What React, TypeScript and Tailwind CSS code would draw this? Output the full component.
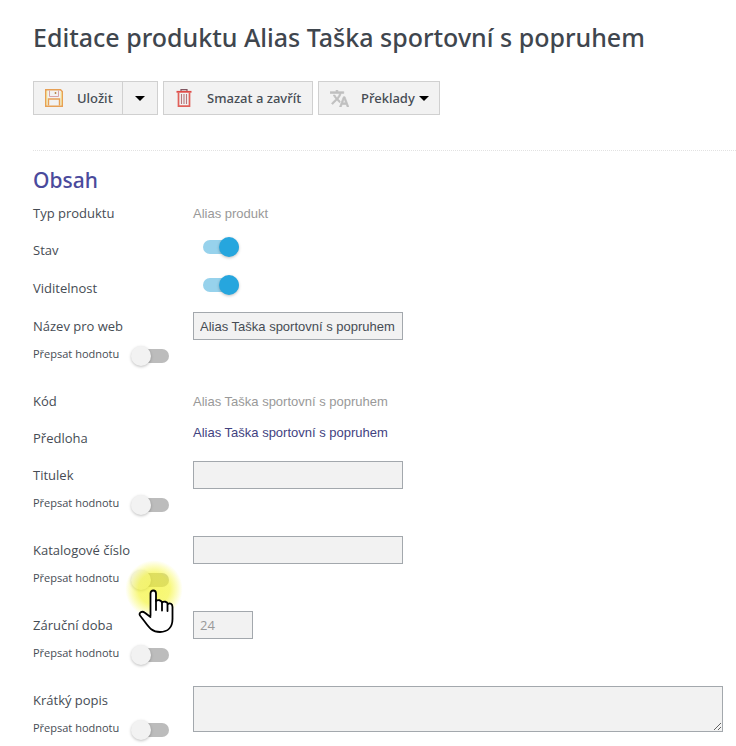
import React, { useState } from 'react';

interface ToggleProps {
  id: string;
  defaultChecked?: boolean;
  className?: string;
}

const Toggle: React.FC<ToggleProps> = ({ id, defaultChecked = false, className = '' }) => {
  const [checked, setChecked] = useState(defaultChecked);

  return (
    <input
      id={id}
      type="checkbox"
      role="switch"
      checked={checked}
      onChange={e => setChecked(e.target.checked)}
      className={`relative block h-3.5 w-9 shrink-0 cursor-pointer appearance-none rounded-full bg-[#bcbcbc] before:absolute before:-left-0.5 before:-top-[3px] before:size-5 before:rounded-full before:bg-[#f2f2f2] before:shadow-[0_1px_3px_rgba(0,0,0,0.25)] checked:bg-[#97d2ec] checked:before:left-4 checked:before:bg-[#26a6de] ${className}`}
    />
  );
};

interface FieldRowProps {
  id: string;
  label: string;
  plain?: boolean;
  override?: boolean;
  className?: string;
  pointer?: boolean;
  children: React.ReactNode;
}

const FieldRow: React.FC<FieldRowProps> = ({ id, label, plain, override, className = '', pointer, children }) => (
  <div className={`flex ${className}`}>
    <div className="w-40 shrink-0 pt-[9px]">
      {plain ? (
        <span className="block leading-5">{label}</span>
      ) : (
        <label htmlFor={id} className="block leading-5">{label}</label>
      )}
      {override && (
        <div className="relative mt-2 flex h-5">
          <label htmlFor={`${id}-override`} className="w-[100px] text-[11px] leading-5">
            Přepsat hodnotu
          </label>
          <Toggle id={`${id}-override`} className="mt-[5px]" />
          {pointer && <Pointer />}
        </div>
      )}
    </div>
    <div className="min-w-0 grow pr-[13px] font-['Liberation_Sans',Arial,sans-serif]">{children}</div>
  </div>
);

// Hand cursor with its click highlight
const Pointer: React.FC = () => (
  <div className="pointer-events-none absolute left-[92px] top-[-8px]">
    <div className="size-[58px] rounded-full bg-[radial-gradient(circle,rgba(243,243,40,0.68)_0%,rgba(243,243,40,0.62)_38%,rgba(248,248,80,0.35)_56%,rgba(255,255,200,0)_70%)]" />
    <svg viewBox="0 0 36 46" className="absolute left-[13px] top-[29px] h-[46px] w-9" fill="#fff" stroke="#000" strokeWidth="1.800" strokeLinejoin="round" strokeLinecap="round">
      <path d="M12.500 26.500V4.500C12.500 0.500 18 0.500 18 4.500V12C20 10.500 23 11 24 13.500C26 12 29 12.500 30 15C32 13.500 34.500 15 34.500 18V30C34.500 38 30 43 22 43C14 43 11 38.500 7 33L2 26.500C0.500 24 4 21.500 6.500 23.500L12.500 28" />
      <path d="M18 11V21M24 13V21.500M29.500 15V22" fill="none" />
    </svg>
  </div>
);

const Caret: React.FC = () => (
  <svg viewBox="0 0 10 5" className="h-[5px] w-2.5" fill="#000">
    <path d="M0 0H10L5 5Z" />
  </svg>
);

const SaveIcon: React.FC = () => (
  <svg viewBox="0 0 18 18" className="size-[18px]" fill="none">
    <path d="M0.800 0.800H15.500L17.200 2.500V17.200H0.800Z" stroke="#e7a055" strokeWidth="1.600" />
    <path d="M1.800 2V16.200M16.200 3V16.200" stroke="#f3df8c" />
    <path d="M4.500 1.500V7.500H13.500V1.500" stroke="#d6a3a8" />
    <path d="M10.500 3V5" stroke="#b98a50" strokeWidth="1.500" />
    <path d="M3.500 16.500V10H14.500V16.500" stroke="#e7a055" strokeWidth="1.400" />
  </svg>
);

const TrashIcon: React.FC = () => (
  <svg viewBox="0 0 16 18" className="h-[18px] w-4" fill="none">
    <path d="M5 2V0.600H11V2" stroke="#80545f" strokeWidth="1.200" />
    <path d="M0.500 2.800H15.500" stroke="#e04b47" strokeWidth="1.800" />
    <path d="M2.500 3.500V17.200H13.500V3.500" stroke="#e0605a" strokeWidth="1.700" />
    <path d="M5.500 5V15M8 5V15M10.500 5V15" stroke="#b8787c" strokeWidth="1.100" />
  </svg>
);

const TranslateIcon: React.FC = () => (
  <svg viewBox="1 2 22 20" className="h-[17px] w-[19px]" fill="#c0c0c0" stroke="#c0c0c0" strokeWidth="0.800">
    <path d="M12.870 15.070l-2.540-2.510.030-.030c1.740-1.940 2.980-4.170 3.710-6.530H17V4h-7V2H8v2H1v1.990h11.170C11.500 7.920 10.440 9.750 9 11.350 8.070 10.320 7.300 9.190 6.690 8h-2c.730 1.630 1.730 3.170 2.980 4.560l-5.090 5.020L4 19l5-5 3.110 3.110.760-2.040zM18.500 10h-2L12 22h2l1.120-3h4.750L21 22h2l-4.500-12zm-2.620 7l1.620-4.330L19.120 17h-3.240z" />
  </svg>
);

const boxClass = 'block border border-[#a3a8ad] bg-[#f2f2f2] px-1.5';
const buttonClass = 'flex h-[34px] items-center border border-[#d0d0d0] bg-[#f2f2f2]';

const App: React.FC = () => {
  return (
    <main className="bg-white pb-2 pl-[33px] font-['Open_Sans',sans-serif] text-[13px] text-[#464c54]">
      <h1 className="pt-[19px] font-['Noto_Sans',sans-serif] text-[25px] font-medium leading-9 text-[#3f464e]">
        Editace produktu Alias Taška sportovní s popruhem
      </h1>

      <div className="mt-[26px] flex gap-[5px] font-['Noto_Sans',sans-serif] font-medium">
        <div className="flex">
          <button type="button" className={`${buttonClass} w-[89px] border-r-0 pl-[11px]`}>
            <SaveIcon />
            <span className="ml-3.5 pt-0.5">Uložit</span>
          </button>
          <button type="button" aria-label="Další možnosti uložení" className={`${buttonClass} w-9 justify-center`}>
            <Caret />
          </button>
        </div>
        <button type="button" className={`${buttonClass} w-[150px] pl-3`}>
          <TrashIcon />
          <span className="ml-[15px] pt-0.5">Smazat a zavřít</span>
        </button>
        <button type="button" className={`${buttonClass} w-[122px] pl-[11px]`}>
          <TranslateIcon />
          <span className="ml-3 mr-1 pt-0.5">Překlady</span>
          <Caret />
        </button>
      </div>

      <hr className="mt-[35px] border-t border-dotted border-[#e2e2e2]" />

      <h2 className="mt-[15px] font-['Noto_Sans',sans-serif] text-[21px] font-medium leading-7 text-[#4a4a9c]">Obsah</h2>

      <form>
        <FieldRow id="type" label="Typ produktu" plain className="h-[37px]">
          <p className="pt-2.5 leading-5 text-[#999999]">Alias produkt</p>
        </FieldRow>
        <FieldRow id="status" label="Stav" className="h-[38px]">
          <Toggle id="status" defaultChecked className="ml-2.5 mt-[9px]" />
        </FieldRow>
        <FieldRow id="visibility" label="Viditelnost" className="h-[38px]">
          <Toggle id="visibility" defaultChecked className="ml-2.5 mt-[9px]" />
        </FieldRow>
        <FieldRow id="name" label="Název pro web" override className="h-[75px]">
          <input id="name" type="text" defaultValue="Alias Taška sportovní s popruhem" className={`${boxClass} mt-[5px] h-7 w-[210px]`} />
        </FieldRow>
        <FieldRow id="code" label="Kód" plain className="h-[37px]">
          <p className="pt-2.5 leading-5 text-[#999999]">Alias Taška sportovní s popruhem</p>
        </FieldRow>
        <FieldRow id="template" label="Předloha" plain className="h-[37px]">
          <p className="pt-1 leading-5">
            <a href="#" className="text-[#42427f]">Alias Taška sportovní s popruhem</a>
          </p>
        </FieldRow>
        <FieldRow id="title" label="Titulek" override className="h-[75px]">
          <input id="title" type="text" className={`${boxClass} mt-[5px] h-7 w-[210px]`} />
        </FieldRow>
        <FieldRow id="catalog" label="Katalogové číslo" override pointer className="h-[75px]">
          <input id="catalog" type="text" className={`${boxClass} mt-[5px] h-7 w-[210px]`} />
        </FieldRow>
        <FieldRow id="warranty" label="Záruční doba" override className="h-[75px]">
          <input id="warranty" type="text" defaultValue="24" className={`${boxClass} mt-[5px] h-7 w-[60px] font-['Open_Sans',sans-serif] text-[#999999]`} />
        </FieldRow>
        <FieldRow id="short" label="Krátký popis" override>
          <textarea id="short" className={`${boxClass} mt-[5px] h-[46px] w-full resize`} />
        </FieldRow>
      </form>
    </main>
  );
};

export default App;
